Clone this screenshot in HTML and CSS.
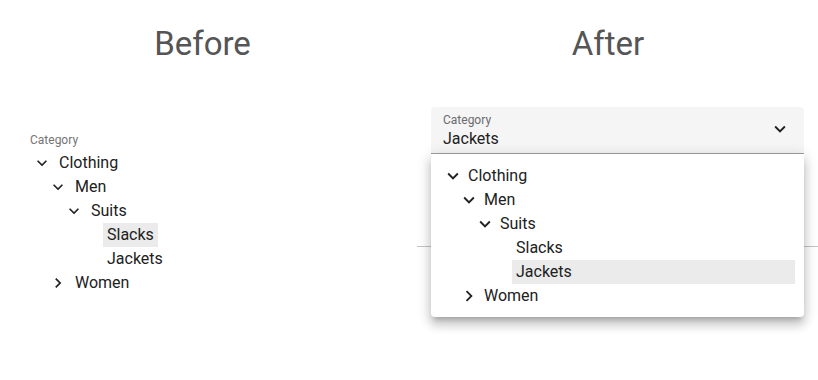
FILE: index.html
```html
<!DOCTYPE html>
<html>
<head>
<meta charset="utf-8">
<link rel="stylesheet" href="styles.css">
</head>
<body>
<div class="page">
  <section class="col col-before">
    <h1 class="title">Before</h1>
    <div class="native">
      <div class="native-label">Category</div>
      <div class="tree tree-s">
        <div class="row lvl-0"><svg class="ic" viewBox="0 0 24 24"><path d="M16.59 8.59L12 13.17 7.41 8.59 6 10l6 6 6-6z"/></svg><span class="lbl">Clothing</span></div>
        <div class="row lvl-1"><svg class="ic" viewBox="0 0 24 24"><path d="M16.59 8.59L12 13.17 7.41 8.59 6 10l6 6 6-6z"/></svg><span class="lbl">Men</span></div>
        <div class="row lvl-2"><svg class="ic" viewBox="0 0 24 24"><path d="M16.59 8.59L12 13.17 7.41 8.59 6 10l6 6 6-6z"/></svg><span class="lbl">Suits</span></div>
        <div class="row lvl-3"><span class="spacer"></span><span class="lbl sel">Slacks</span></div>
        <div class="row lvl-3"><span class="spacer"></span><span class="lbl">Jackets</span></div>
        <div class="row lvl-1"><svg class="ic" viewBox="0 0 24 24"><path d="M10 6L8.59 7.41 13.17 12l-4.58 4.59L10 18l6-6z"/></svg><span class="lbl">Women</span></div>
      </div>
    </div>
  </section>
  <section class="col col-after">
    <h1 class="title title-after">After</h1>
    <div class="select-wrap">
      <div class="field">
        <div class="field-text">
          <div class="field-label">Category</div>
          <div class="field-value">Jackets</div>
        </div>
        <svg class="ic-field" viewBox="0 0 24 24"><path d="M16.59 8.59L12 13.17 7.41 8.59 6 10l6 6 6-6z"/></svg>
      </div>
      <div class="menu">
        <div class="tree tree-m">
          <div class="row lvl-0"><svg class="ic" viewBox="0 0 24 24"><path d="M16.59 8.59L12 13.17 7.41 8.59 6 10l6 6 6-6z"/></svg><span class="lbl">Clothing</span></div>
          <div class="row lvl-1"><svg class="ic" viewBox="0 0 24 24"><path d="M16.59 8.59L12 13.17 7.41 8.59 6 10l6 6 6-6z"/></svg><span class="lbl">Men</span></div>
          <div class="row lvl-2"><svg class="ic" viewBox="0 0 24 24"><path d="M16.59 8.59L12 13.17 7.41 8.59 6 10l6 6 6-6z"/></svg><span class="lbl">Suits</span></div>
          <div class="row lvl-3"><span class="spacer"></span><span class="lbl grow">Slacks</span></div>
          <div class="row lvl-3"><span class="spacer"></span><span class="lbl grow sel">Jackets</span></div>
          <div class="row lvl-1"><svg class="ic" viewBox="0 0 24 24"><path d="M10 6L8.59 7.41 13.17 12l-4.58 4.59L10 18l6-6z"/></svg><span class="lbl">Women</span></div>
        </div>
      </div>
    </div>
    <div class="rule"></div>
  </section>
</div>
</body>
</html>
```

FILE: styles.css
```css
* { box-sizing: border-box; }
html, body { margin: 0; padding: 0; background: #fff; }
body {
  font-family: Roboto, "Liberation Sans", sans-serif;
  color: #212121;
  width: 818px;
  height: 380px;
  overflow: hidden;
}
.page {
  display: grid;
  grid-template-columns: 405px 1fr;
}
.col { min-width: 0; }
.title {
  margin: 24px 0 0;
  font-size: 33px;
  line-height: 40px;
  font-weight: 400;
  color: #555;
  text-align: center;
}
.title-after { padding-right: 19px; }

/* Before */
.native { margin-top: 68px; padding-left: 32px; }
.native-label {
  font-size: 12px;
  line-height: 16px;
  color: #757575;
  margin-left: -2px;
  margin-bottom: 3px;
}
.tree { display: flex; flex-direction: column; }
.row {
  display: flex;
  align-items: center;
  height: 24px;
  font-size: 16px;
  line-height: 24px;
}
.tree-s .lvl-1 { padding-left: 16px; }
.tree-s .lvl-2 { padding-left: 32px; }
.tree-s .lvl-3 { padding-left: 48px; }
.tree-s .ic, .tree-s .spacer { width: 20px; height: 20px; flex: none; margin-right: 3px; fill: #212121; }
.lbl { padding: 0 4px; height: 24px; white-space: nowrap; }
.sel { background: #ebebeb; }

/* After */
.col-after { padding-left: 12px; }
.select-wrap { position: relative; margin: 43px 14px 0 14px; }
.field {
  display: flex;
  align-items: center;
  height: 47px;
  padding: 5px 13px 4px 12px;
  background: #f5f5f5;
  border-radius: 4px 4px 0 0;
  border-bottom: 1px solid #9e9e9e;
}
.field-text { flex: 1; }
.field-label { font-size: 12px; line-height: 16px; color: #6b6b6b; }
.field-value { font-size: 16px; line-height: 20px; margin-top: 1px; color: #212121; }
.ic-field { width: 22px; height: 22px; fill: #212121; flex: none; margin-top: -3px; }
.menu {
  position: absolute;
  top: 100%;
  left: 0;
  right: 0;
  background: #fff;
  border-radius: 0 0 4px 4px;
  padding: 10px 9px 9px 11px;
  box-shadow: 0 5px 5px -3px rgba(0,0,0,.2), 0 8px 10px 1px rgba(0,0,0,.14), 0 3px 14px 2px rgba(0,0,0,.12);
  z-index: 2;
}
.tree-m .lvl-1 { padding-left: 16px; }
.tree-m .lvl-2 { padding-left: 32px; }
.tree-m .lvl-3 { padding-left: 48px; }
.tree-m .ic, .tree-m .spacer { width: 22px; height: 22px; flex: none; fill: #212121; }
.grow { flex: 1; }
.rule {
  margin-top: 92px;
  height: 1px;
  background: #c4c4c4;
}
```
